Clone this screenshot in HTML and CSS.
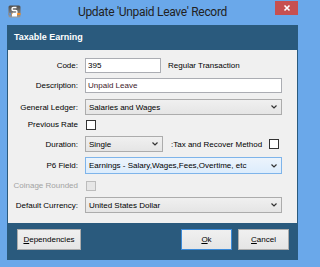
FILE: index.html
```html
<!DOCTYPE html>
<html>
<head>
<meta charset="utf-8">
<link rel="stylesheet" href="styles.css">
</head>
<body>
<div class="window">
  <div class="titlebar">
    <svg class="app-icon" width="13" height="13" viewBox="0 0 13 13">
      <defs>
        <linearGradient id="ig" x1="0" y1="0" x2="0" y2="1">
          <stop offset="0" stop-color="#4d4d4d"/>
          <stop offset="1" stop-color="#9b9b9b"/>
        </linearGradient>
      </defs>
      <rect x="0.5" y="0.5" width="12" height="12" rx="1.5" fill="url(#ig)"/>
      <rect x="0.5" y="8" width="12" height="2" fill="#f08a24"/>
      <rect x="0.5" y="8" width="3" height="2" fill="#5b8fd0"/>
      <path d="M8.5 2.5 H5.5 A1.5 1.5 0 0 0 5.5 5.5 H7.5 A1.5 1.5 0 0 1 7.5 8.5 H4.5" fill="none" stroke="#fff" stroke-width="1.4"/>
      <rect x="4" y="9" width="5" height="2.5" fill="#fff"/>
    </svg>
    <div class="title">Update 'Unpaid Leave' Record</div>
    <div class="close">
      <svg width="8" height="8" viewBox="0 0 8 8"><path d="M1.5 1.5 L6.5 6.5 M6.5 1.5 L1.5 6.5" stroke="#fff" stroke-width="1.6"/></svg>
    </div>
  </div>
  <div class="client">
    <div class="header">Taxable Earning</div>
    <div class="form">
      <div class="label">Code:</div>
      <div class="cell">
        <div class="input w-code">395</div>
        <span class="text">Regular Transaction</span>
      </div>

      <div class="label">Description:</div>
      <div class="cell">
        <div class="input w-full desc">Unpaid Leave</div>
      </div>

      <div class="label">General Ledger:</div>
      <div class="cell">
        <div class="combo w-full"><span>Salaries and Wages</span><svg class="chev" width="6" height="4" viewBox="0 0 6 4"><path d="M0.5 0.5 L3 3 L5.5 0.5" fill="none" stroke="#333" stroke-width="1.2"/></svg></div>
      </div>

      <div class="label">Previous Rate</div>
      <div class="cell">
        <div class="check"></div>
      </div>

      <div class="label">Duration:</div>
      <div class="cell">
        <div class="combo w-dur"><span>Single</span><svg class="chev" width="6" height="4" viewBox="0 0 6 4"><path d="M0.5 0.5 L3 3 L5.5 0.5" fill="none" stroke="#333" stroke-width="1.2"/></svg></div>
        <span class="text tax">:Tax and Recover Method</span>
        <div class="check"></div>
      </div>

      <div class="label">P6 Field:</div>
      <div class="cell">
        <div class="combo w-full focus"><span>Earnings - Salary,Wages,Fees,Overtime, etc</span><svg class="chev" width="6" height="4" viewBox="0 0 6 4"><path d="M0.5 0.5 L3 3 L5.5 0.5" fill="none" stroke="#333" stroke-width="1.2"/></svg></div>
      </div>

      <div class="label disabled">Coinage Rounded</div>
      <div class="cell">
        <div class="check off"></div>
      </div>

      <div class="label">Default Currency:</div>
      <div class="cell">
        <div class="combo w-full"><span>United States Dollar</span><svg class="chev" width="6" height="4" viewBox="0 0 6 4"><path d="M0.5 0.5 L3 3 L5.5 0.5" fill="none" stroke="#333" stroke-width="1.2"/></svg></div>
      </div>
    </div>
    <div class="footer">
      <div class="btn w-dep"><u>D</u>ependencies</div>
      <div class="spacer"></div>
      <div class="btn w-ok default"><u>O</u>k</div>
      <div class="btn w-ok"><u>C</u>ancel</div>
    </div>
  </div>
</div>
</body>
</html>
```
FILE: styles.css
```css
html, body {
  margin: 0;
  padding: 0;
  background: #6aa8ea;
}
body {
  font-family: "Liberation Sans", Arial, sans-serif;
  font-size: 8px;
  color: #000;
}
.window {
  width: 305px;
  height: 267px;
  box-sizing: border-box;
  padding: 0 7px 7px 7px;
  background: #6aa8ea;
  display: flex;
  flex-direction: column;
}
.titlebar {
  height: 25px;
  display: grid;
  grid-template-columns: 1fr auto 1fr;
  align-items: start;
}
.app-icon {
  margin: 5px 0 0 1px;
  justify-self: start;
}
.title {
  font-family: Roboto, "Liberation Sans", sans-serif;
  font-size: 12px;
  letter-spacing: -0.3px;
  color: #222;
  margin-top: 4px;
  line-height: 16px;
  white-space: nowrap;
}
.close {
  justify-self: end;
  margin-top: 1px;
  width: 23px;
  height: 14px;
  background: #c75050;
  display: flex;
  align-items: center;
  justify-content: center;
}
.client {
  flex: 1;
  background: #2a5a7d;
  display: flex;
  flex-direction: column;
  padding: 0 1px 1px 1px;
}
.header {
  height: 25px;
  line-height: 25px;
  padding-left: 6px;
  color: #fff;
  font-weight: bold;
  font-size: 9px;
}
.form {
  background: #f0f0f0;
  height: 173px;
  box-sizing: border-box;
  padding: 5px 0 10px 0;
  display: grid;
  grid-template-columns: 70px 1fr;
  grid-template-rows: 20px 21px 22px 13px 26px 17px 23px 16px;
  column-gap: 7px;
}
.label {
  text-align: right;
  align-self: center;
  white-space: nowrap;
}
.label.disabled {
  color: #a3a3a3;
}
.cell {
  display: flex;
  align-items: center;
}
.input {
  box-sizing: border-box;
  height: 15px;
  border: 1px solid #abadb3;
  background: #fff;
  padding-left: 2px;
  line-height: 13px;
  white-space: nowrap;
}
.desc {
  color: #3e1a2a;
}
.w-code { width: 76px; }
.w-full { width: 197px; }
.w-dur { width: 78px; }
.text {
  margin-left: 7px;
  white-space: nowrap;
}
.tax {
  margin-left: 8px;
  margin-right: 7px;
}
.combo {
  box-sizing: border-box;
  height: 16px;
  border: 1px solid #acacac;
  background: linear-gradient(#f0f0f0, #e5e5e5);
  display: flex;
  align-items: center;
  justify-content: space-between;
  padding: 0 4px 0 3px;
  white-space: nowrap;
}
.combo.focus {
  height: 17px;
  border-color: #7eb4ea;
  background: linear-gradient(#ecf4fc, #dcecfc);
}
.check {
  box-sizing: border-box;
  width: 10px;
  height: 10px;
  margin-left: 1px;
  border: 1px solid #333;
  background: #fff;
}
.tax + .check {
  margin-left: 0;
}
.check.off {
  border-color: #bcbcbc;
  background: #e6e6e6;
}
.footer {
  flex: 1;
  display: flex;
  align-items: flex-start;
  padding: 6px 8px 0 9px;
  gap: 6px;
}
.spacer { flex: 1; }
.btn {
  box-sizing: border-box;
  height: 21px;
  border: 1px solid #acacac;
  background: linear-gradient(#f0f0f0, #e5e5e5);
  display: flex;
  align-items: center;
  justify-content: center;
  white-space: nowrap;
}
.btn.default {
  border-color: #3c8ad8;
}
.w-dep { width: 64px; }
.w-ok { width: 51px; }
```
